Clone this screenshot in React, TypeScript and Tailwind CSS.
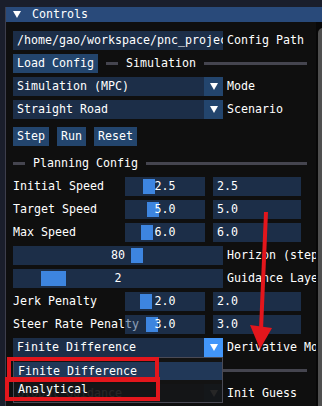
import React from 'react';

const frame = 'bg-[rgba(41,74,122,0.54)]';
const btn = 'bg-[rgba(66,150,250,0.4)]';

function Tri({ className = '' }: { className?: string }) {
    return (
        <svg width="8" height="7" viewBox="0 0 8 7" className={className}>
            <polygon points="0,0 8,0 4,7" fill="#ffffff" />
        </svg>
    );
}

function SepText({ label, className = '' }: { label: string; className?: string }) {
    return (
        <div className={`flex items-center h-[19px] mr-[9px] ${className}`}>
            <div className="w-[12px] h-[3px] bg-[#45454f] shrink-0" />
            <span className="mx-[8px] whitespace-nowrap">{label}</span>
            <div className="flex-1 h-[3px] bg-[#45454f]" />
        </div>
    );
}

function Combo({ value, label, active = false }: { value: string; label: string; active?: boolean }) {
    return (
        <div className="flex h-[19px] gap-[4px]">
            <div className="flex w-[210px] shrink-0">
                <div className={`flex-1 pl-[4px] whitespace-nowrap overflow-hidden ${frame}`}>{value}</div>
                <div className={`w-[19px] flex items-center justify-center ${active ? 'bg-[#4296fa]' : btn}`}>
                    <Tri />
                </div>
            </div>
            <span className="whitespace-nowrap">{label}</span>
        </div>
    );
}

// label | slider | input, like ImGui SliderFloat + InputFloat on one line
function SliderRow({ label, value, grab }: { label: string; value: string; grab: number }) {
    return (
        <div className="flex h-[19px]">
            <span className="w-[112px] shrink-0 whitespace-nowrap">{label}</span>
            <div className={`relative w-[80px] shrink-0 ${frame}`}>
                <div className="absolute top-[2px] h-[15px] w-[12px] bg-[#3d85e0]" style={{ left: grab }} />
                <div className="relative text-center">{value}</div>
            </div>
            <div className={`ml-[8px] w-[88px] shrink-0 pl-[4px] ${frame}`}>{value}</div>
        </div>
    );
}

function IntSlider({ label, value, grab, grabW }: { label: string; value: string; grab: number; grabW: number }) {
    return (
        <div className="flex h-[19px] gap-[4px]">
            <div className={`relative w-[210px] shrink-0 ${frame}`}>
                <div className="absolute top-[2px] h-[15px] bg-[#3d85e0]" style={{ left: grab, width: grabW }} />
                <div className="relative text-center">{value}</div>
            </div>
            <span className="whitespace-nowrap">{label}</span>
        </div>
    );
}

export default function App() {
    return (
        <div className="relative w-[322px] h-[406px] overflow-hidden bg-[#1a1e2b] text-white text-[11.63px] leading-[19px] font-['DejaVu_Sans_Mono',monospace]">
            <div className="ml-[5px] mt-[7px] w-[326px] h-[400px] border-l border-[#3d3e4c] bg-[#0f0f0f]">
                {/* Title bar */}
                <div className="h-[15px] bg-[#294a7a] flex items-center pl-[7px] gap-[11px] leading-[15px]">
                    <Tri />
                    <span>Controls</span>
                </div>

                <div className="flex h-[385px]">
                    <div className="w-[310px] overflow-hidden pl-[7px] pt-[9px] flex flex-col gap-[4px]">
                        <div className="flex h-[19px] gap-[4px]">
                            <div className={`w-[210px] shrink-0 pl-[4px] whitespace-nowrap overflow-hidden ${frame}`}>
                                /home/gao/workspace/pnc_project/config.yaml
                            </div>
                            <span className="whitespace-nowrap">Config Path</span>
                        </div>

                        <div className="flex h-[19px] gap-[8px]">
                            <div className={`px-[4px] shrink-0 ${btn}`}>Load Config</div>
                            <SepText label="Simulation" className="flex-1" />
                        </div>

                        <Combo value="Simulation (MPC)" label="Mode" />
                        <Combo value="Straight Road" label="Scenario" />

                        <div className="flex h-[19px] gap-[8px] mt-[4px]">
                            <div className={`px-[4px] ${btn}`}>Step</div>
                            <div className={`px-[4px] ${btn}`}>Run</div>
                            <div className={`px-[4px] ${btn}`}>Reset</div>
                        </div>

                        <SepText label="Planning Config" className="mt-[4px]" />

                        <SliderRow label="Initial Speed" value="2.5" grab={18} />
                        <SliderRow label="Target Speed" value="5.0" grab={22} />
                        <SliderRow label="Max Speed" value="6.0" grab={16} />
                        <IntSlider label="Horizon (steps)" value="80" grab={118} grabW={12} />
                        <IntSlider label="Guidance Layers" value="2" grab={28} grabW={25} />
                        <SliderRow label="Jerk Penalty" value="2.0" grab={15} />
                        <SliderRow label="Steer Rate Penalty" value="3.0" grab={21} />

                        <Combo value="Finite Difference" label="Derivative Mode" active />
                        <SepText label="Initial Guess / Warm Start" />
                        <Combo value="Global Guidance" label="Init Guess" />
                    </div>

                    {/* Scrollbar */}
                    <div className="w-[14px] bg-[#080808] pt-[6px] pl-[2px]">
                        <div className="w-[10px] h-full bg-[#4f4f4f] rounded-t-[5px]" />
                    </div>
                </div>
            </div>

            {/* Open combo popup */}
            <div className="absolute left-[13px] top-[357px] w-[210px] h-[46px] border border-[#4a4a55] bg-[rgba(20,20,20,0.92)] pt-[4px] leading-[18px]">
                <div className="h-[18px] pl-[4px] bg-[#213858]">Finite Difference</div>
                <div className="h-[18px] pl-[4px]">Analytical</div>
            </div>

            {/* Red annotation marks */}
            <svg className="absolute inset-0 pointer-events-none" width="322" height="406" viewBox="0 0 322 406">
                <rect x="9" y="359" width="148" height="21" fill="none" stroke="#e3161c" strokeWidth="4" />
                <rect x="7" y="379" width="151" height="20" fill="none" stroke="#e3161c" strokeWidth="4" />
                <line x1="266" y1="212" x2="261" y2="330" stroke="#e3161c" strokeWidth="4" />
                <polygon points="250,325 272,328 260,349" fill="#e3161c" />
            </svg>
        </div>
    );
}
